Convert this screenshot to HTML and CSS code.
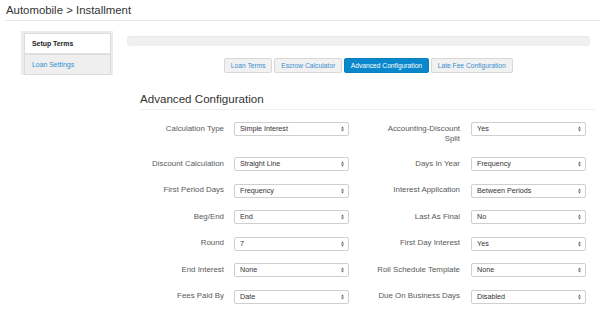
FILE: index.html
```html
<!DOCTYPE html>
<html>
<head>
<meta charset="utf-8">
<link rel="stylesheet" href="styles.css">
</head>
<body>
<header class="page-title">Automobile &gt; Installment</header>
<div class="layout">
  <aside class="sidebar">
    <a class="side-item active">Setup Terms</a>
    <a class="side-item">Loan Settings</a>
  </aside>
  <main class="content">
    <div class="progress"></div>
    <nav class="tabs">
      <a class="tab">Loan Terms</a>
      <a class="tab">Escrow Calculator</a>
      <a class="tab active">Advanced Configuration</a>
      <a class="tab">Late Fee Configuration</a>
    </nav>
    <section class="config">
      <h2 class="config-title">Advanced Configuration</h2>
      <div class="form-grid">
        <label class="lbl">Calculation Type</label>
        <div class="sel"><select><option>Simple Interest</option></select><svg class="caret" viewBox="0 0 5 8"><path d="M2.5 0L5 3H0Z M2.5 8L0 5H5Z"/></svg></div>
        <label class="lbl lbl-r">Accounting-Discount Split</label>
        <div class="sel"><select><option>Yes</option></select><svg class="caret" viewBox="0 0 5 8"><path d="M2.5 0L5 3H0Z M2.5 8L0 5H5Z"/></svg></div>

        <label class="lbl">Discount Calculation</label>
        <div class="sel"><select><option>Straight Line</option></select><svg class="caret" viewBox="0 0 5 8"><path d="M2.5 0L5 3H0Z M2.5 8L0 5H5Z"/></svg></div>
        <label class="lbl lbl-r">Days In Year</label>
        <div class="sel"><select><option>Frequency</option></select><svg class="caret" viewBox="0 0 5 8"><path d="M2.5 0L5 3H0Z M2.5 8L0 5H5Z"/></svg></div>

        <label class="lbl">First Period Days</label>
        <div class="sel"><select><option>Frequency</option></select><svg class="caret" viewBox="0 0 5 8"><path d="M2.5 0L5 3H0Z M2.5 8L0 5H5Z"/></svg></div>
        <label class="lbl lbl-r">Interest Application</label>
        <div class="sel"><select><option>Between Periods</option></select><svg class="caret" viewBox="0 0 5 8"><path d="M2.5 0L5 3H0Z M2.5 8L0 5H5Z"/></svg></div>

        <label class="lbl">Beg/End</label>
        <div class="sel"><select><option>End</option></select><svg class="caret" viewBox="0 0 5 8"><path d="M2.5 0L5 3H0Z M2.5 8L0 5H5Z"/></svg></div>
        <label class="lbl lbl-r">Last As Final</label>
        <div class="sel"><select><option>No</option></select><svg class="caret" viewBox="0 0 5 8"><path d="M2.5 0L5 3H0Z M2.5 8L0 5H5Z"/></svg></div>

        <label class="lbl">Round</label>
        <div class="sel"><select><option>7</option></select><svg class="caret" viewBox="0 0 5 8"><path d="M2.5 0L5 3H0Z M2.5 8L0 5H5Z"/></svg></div>
        <label class="lbl lbl-r">First Day Interest</label>
        <div class="sel"><select><option>Yes</option></select><svg class="caret" viewBox="0 0 5 8"><path d="M2.5 0L5 3H0Z M2.5 8L0 5H5Z"/></svg></div>

        <label class="lbl">End Interest</label>
        <div class="sel"><select><option>None</option></select><svg class="caret" viewBox="0 0 5 8"><path d="M2.5 0L5 3H0Z M2.5 8L0 5H5Z"/></svg></div>
        <label class="lbl lbl-r">Roll Schedule Template</label>
        <div class="sel"><select><option>None</option></select><svg class="caret" viewBox="0 0 5 8"><path d="M2.5 0L5 3H0Z M2.5 8L0 5H5Z"/></svg></div>

        <label class="lbl">Fees Paid By</label>
        <div class="sel"><select><option>Date</option></select><svg class="caret" viewBox="0 0 5 8"><path d="M2.5 0L5 3H0Z M2.5 8L0 5H5Z"/></svg></div>
        <label class="lbl lbl-r">Due On Business Days</label>
        <div class="sel"><select><option>Disabled</option></select><svg class="caret" viewBox="0 0 5 8"><path d="M2.5 0L5 3H0Z M2.5 8L0 5H5Z"/></svg></div>
      </div>
    </section>
  </main>
</div>
</body>
</html>
```

FILE: styles.css
```css
* { box-sizing: border-box; }
html, body { margin: 0; padding: 0; background: #fff; }
body {
  font-family: "Liberation Sans", Arial, sans-serif;
  color: #333;
  width: 600px;
  height: 310px;
  overflow: hidden;
}

.page-title {
  margin-left: 5px;
  padding: 3px 0 3px 1px;
  font-size: 11.4px;
  line-height: 14px;
  color: #333;
  border-bottom: 1px solid #e8e8e8;
}

.layout {
  display: flex;
  align-items: flex-start;
}

.sidebar {
  margin: 10px 0 0 21px;
  width: 92px;
  background: #ebebeb;
  padding: 2px 2px 0 3px;
  display: flex;
  flex-direction: column;
}
.side-item {
  display: block;
  height: 21px;
  padding-left: 7px;
  font-size: 6.9px;
  line-height: 19px;
  border: 1px solid #dcdcdc;
  background: #efefef;
  color: #2a8fd4;
}
.side-item.active {
  height: 21px;
  background: #fff;
  color: #222;
  font-weight: bold;
  border-bottom-color: #e2e2e2;
}

.content {
  margin-left: 14px;
  width: 463px;
  padding-top: 15px;
}

.progress {
  height: 10px;
  border-radius: 3px;
  background: #f0f0f0;
  box-shadow: inset 0 1px 1px rgba(0,0,0,0.04);
}

.tabs {
  display: flex;
  gap: 2px;
  margin-top: 12px;
  padding-left: 97px;
}
.tab {
  display: block;
  height: 15px;
  padding: 0 5.8px;
  font-size: 6.7px;
  line-height: 13px;
  color: #3a8fd0;
  background: #f1f1f1;
  border: 1px solid #d8d8d8;
  border-radius: 2px;
}
.tab.active {
  background: #0a88cb;
  border-color: #0a7fbd;
  color: #fff;
}

.config {
  padding-left: 13px;
  margin-right: -5px;
}
.config-title {
  margin: 19px 0 0;
  padding-bottom: 3px;
  font-size: 11.6px;
  line-height: 14px;
  font-weight: normal;
  color: #333;
  border-bottom: 1px solid #eeeeee;
}

.form-grid {
  margin: 12px 0 0 -2px;
  display: grid;
  grid-template-columns: 86px 115px 102px 115px;
  column-gap: 10px;
  row-gap: 12.5px;
  align-items: start;
}
.lbl {
  text-align: right;
  font-size: 7.9px;
  line-height: 10.7px;
  padding-top: 1.5px;
  color: #5a5a5a;
}
.lbl-r {
  padding-left: 16px;
  padding-right: 1px;
}

.sel {
  position: relative;
  height: 14px;
}
.sel select {
  -webkit-appearance: none;
  appearance: none;
  display: block;
  width: 100%;
  height: 14px;
  margin: 0;
  padding: 0 0 0 5px;
  font-family: "Liberation Sans", Arial, sans-serif;
  font-size: 7.2px;
  line-height: 12px;
  color: #333;
  background: #fff;
  border: 1px solid #cfcfcf;
  border-radius: 2px;
  outline: none;
}
.caret {
  position: absolute;
  right: 5px;
  top: 4px;
  width: 3px;
  height: 6px;
  fill: #666;
}
```
